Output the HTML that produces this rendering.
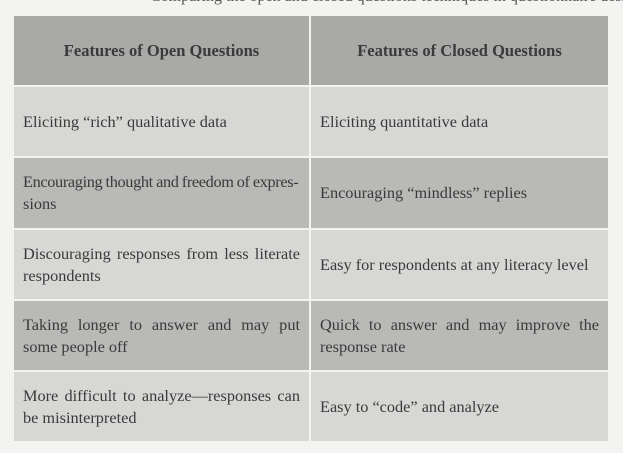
<!DOCTYPE html>
<html><head><style>
body{margin:0;width:623px;height:453px;background:#f3f3f1;position:relative;overflow:hidden;font-family:"Liberation Serif",serif;color:#3a3a3a}
.c{position:absolute;box-sizing:border-box;padding:0 9px 0 9px;display:flex;align-items:center;font-size:16.3px;line-height:22px;text-align:justify}
.c span{display:block;width:100%}
.h{background:#a9a9a7;font-weight:bold;justify-content:center;text-align:center;font-size:16.5px}
.l{background:#d7d7d5}
.d{background:#b9b9b7}
.top{position:absolute;top:-12px;left:150px;font-size:16px;color:#555;white-space:nowrap}
.j{display:block;white-space:nowrap;letter-spacing:-0.35px;word-spacing:-0.5px;overflow:visible}
</style></head><body>
<div class="top">Comparing the open and closed questions techniques in questionnaire design</div>
<div class="c h" style="left:14px;top:16px;width:295px;height:69px"><span>Features of Open Questions</span></div>
<div class="c h" style="left:311px;top:16px;width:297px;height:69px"><span>Features of Closed Questions</span></div>

<div class="c l" style="left:14px;top:87px;width:295px;height:69px"><span>Eliciting “rich” qualitative data</span></div>
<div class="c l" style="left:311px;top:87px;width:297px;height:69px"><span>Eliciting quantitative data</span></div>

<div class="c d" style="left:14px;top:158px;width:295px;height:70px"><span><span class="j">Encouraging thought and freedom of expres-</span>sions</span></div>
<div class="c d" style="left:311px;top:158px;width:297px;height:70px"><span>Encouraging “mindless” replies</span></div>

<div class="c l" style="left:14px;top:230px;width:295px;height:69px"><span>Discouraging responses from less literate respondents</span></div>
<div class="c l" style="left:311px;top:230px;width:297px;height:69px"><span>Easy for respondents at any literacy level</span></div>

<div class="c d" style="left:14px;top:301px;width:295px;height:69px"><span>Taking longer to answer and may put some people off</span></div>
<div class="c d" style="left:311px;top:301px;width:297px;height:69px"><span>Quick to answer and may improve the response rate</span></div>

<div class="c l" style="left:14px;top:372px;width:295px;height:69px"><span>More difficult to analyze—responses can be misinterpreted</span></div>
<div class="c l" style="left:311px;top:372px;width:297px;height:69px"><span>Easy to “code” and analyze</span></div>
</body></html>
